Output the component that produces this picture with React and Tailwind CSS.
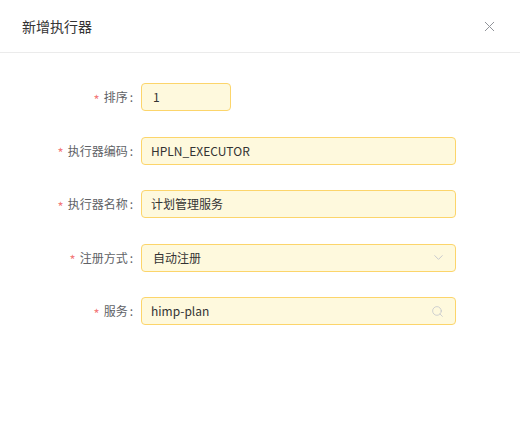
import React from 'react';
import { ChevronDown, Search, X } from 'lucide-react';

const font = { fontFamily: '"Noto Sans CJK SC", "Noto Sans", sans-serif' };

const Field = ({ label, children }) => (
  <div className="flex items-center h-[28px]">
    <div className="w-[135px] flex items-center justify-end pr-[2px] text-[12px] text-[#606266]">
      <span className="text-[#f37b7b] text-[13px] leading-none mr-[4px] mt-[4px]">*</span>
      <span>{label}</span>
      <span className="ml-[2px]">:</span>
    </div>
    <div className="ml-[6px] flex-1">{children}</div>
  </div>
);

const Box = ({ className = '', children }) => (
  <div
    className={`h-[28px] flex items-center px-[9px] rounded-[4px] border border-[#fcd56b] bg-[#fef9dd] text-[12px] text-[#333] ${className}`}
  >
    {children}
  </div>
);

export default function App() {
  return (
    <div className="w-[520px] h-[429px] bg-white" style={font}>
      {/* header */}
      <div className="h-[53px] flex items-center justify-between pl-[22px] pr-[22px] border-b border-[#ebebeb]">
        <span className="text-[14px] text-[#333]">新增执行器</span>
        <X size={17} strokeWidth={1.4} className="text-[#909399]" />
      </div>

      {/* form */}
      <div className="flex flex-col gap-[25.5px] pt-[30px] pr-[64px]">
        <Field label="排序">
          <Box className="w-[90px] pl-[11px]">1</Box>
        </Field>
        <Field label="执行器编码">
          <Box>HPLN_EXECUTOR</Box>
        </Field>
        <Field label="执行器名称">
          <Box>计划管理服务</Box>
        </Field>
        <Field label="注册方式">
          <Box className="justify-between pl-[11px]">
            <span>自动注册</span>
            <ChevronDown size={15} strokeWidth={1.4} className="text-[#c0c4cc]" />
          </Box>
        </Field>
        <Field label="服务">
          <Box className="justify-between">
            <span>himp-plan</span>
            <Search size={13} strokeWidth={1.4} className="text-[#c0c4cc] mr-[2px]" />
          </Box>
        </Field>
      </div>
    </div>
  );
}
